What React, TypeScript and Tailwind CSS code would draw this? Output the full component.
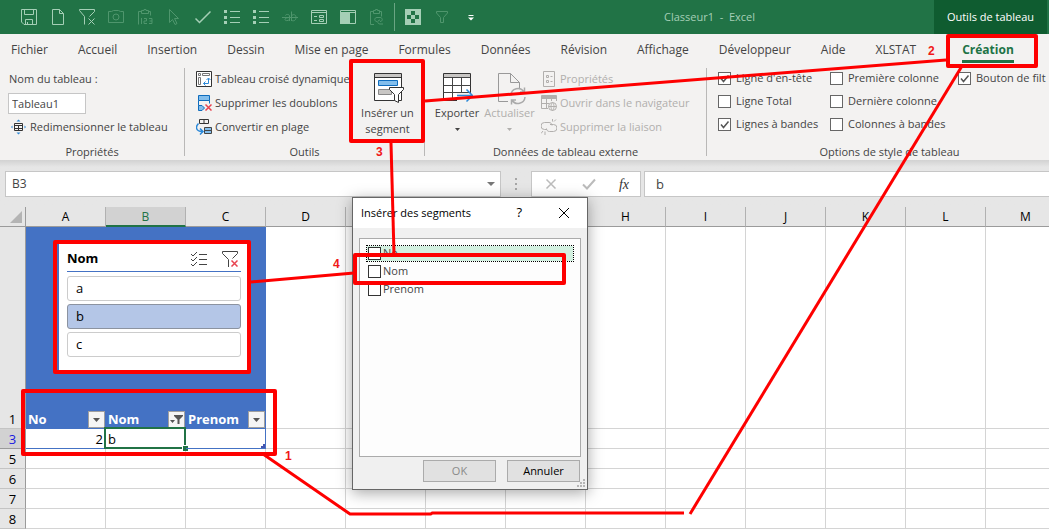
import { ReactNode, useState } from 'react';
import clsx from 'clsx';

const tabs = [
  'Fichier',
  'Accueil',
  'Insertion',
  'Dessin',
  'Mise en page',
  'Formules',
  'Données',
  'Révision',
  'Affichage',
  'Développeur',
  'Aide',
  'XLSTAT',
];

const columns = ['A', 'B', 'C', 'D', 'E', 'F', 'G', 'H', 'I', 'J', 'K', 'L', 'M'];

const Svg = ({ size = 16, children }: { size?: number; children: ReactNode }) => (
  <svg
    width={size}
    height={size}
    viewBox={`0 0 ${size} ${size}`}
    fill="none"
    stroke="currentColor"
    className="shrink-0"
    aria-hidden
  >
    {children}
  </svg>
);

const bulletList = (
  <>
    <path d="M6 2.5h10M6 8.5h10M6 13.5h10" />
    <path d="M0 1h3v3H0zM0 7h3v3H0zM0 12h3v3H0z" fill="currentColor" stroke="none" />
  </>
);

const quickActions: { name: string; dim?: boolean; icon: ReactNode }[] = [
  {
    name: 'Enregistrer',
    icon: <path d="M.5.5h15v15H3L.5 13zM3.5.5v5h9v-5M4.5 15.5v-5h7v5M6.5 13v2.5" />,
  },
  { name: 'Nouveau', icon: <path d="M2.5.5h7l4 4v11h-11zM9.5.5v4h4" /> },
  {
    name: 'Effacer le filtre',
    icon: <path d="M.5 1.5v-1h15v2l-5 5M.5 1.5l5 6v8M9.5 9.5l6 6M15.5 9.5l-6 6" />,
  },
  {
    name: 'Appareil photo',
    dim: true,
    icon: (
      <>
        <path d="M.5 2.5h3l2-1h5l2 1h3v11H.5z" />
        <circle cx="8" cy="8" r="3" />
      </>
    ),
  },
  {
    name: 'Coller les valeurs',
    dim: true,
    icon: (
      <>
        <path d="M1.5 15.5v-13h3M11.5 2.5h2v4M4.5 4.5v-3H7v-1h2v1h2.5v3z" />
        <path d="M4.5 9v6M4 9.5h1M7 9.5h2.5V12H7v2.5h3M12 9.5h3v5h-3M12.5 12H15" />
      </>
    ),
  },
  { name: 'Sélectionner', dim: true, icon: <path d="M3.5.5l9 9h-4l2.5 5-2 1-2.5-5-3 3z" /> },
  { name: 'Valider', icon: <path d="M.5 9.5l4 4 11-11" strokeWidth="1.5" /> },
  { name: 'Puces', icon: bulletList },
  { name: 'Liste', icon: bulletList },
  {
    name: 'Barré',
    dim: true,
    icon: (
      <>
        <path d="M0 8.5h16M7.5 12V7c0-2-4-2-4-.5M7.5 8.5C5.500 8.500 3 9 3 10.500s3 1.500 4.500 0" />
        <path d="M9.5 2.5V12M9.5 7c1-2 4.500-2 4.500 1.500S10.500 12.500 9.500 11" />
      </>
    ),
  },
  {
    name: 'Formulaire',
    icon: <path d="M.5 1.5h15v13H.5zM.5 3.5h15M3 7.5h3M3 11.5h3M8.5 6.5h4v2h-4zM8.5 10.5h4v2h-4z" />,
  },
  {
    name: 'Volet',
    icon: (
      <>
        <path d="M.5 1.5h15v13H.5zM.5 3.5h15" />
        <path d="M0 4h10v11H0z" fill="currentColor" stroke="none" />
      </>
    ),
  },
  {
    name: 'Collage spécial',
    dim: true,
    icon: (
      <>
        <path d="M5 15.5H1.5v-13h3M10.5 2.5h2v5M4.5 4.5v-3h2v-1h2v1h2v3z" />
        <path d="M8 12.5c-3 0-3-4 0-4h3c3 0 3 4 0 4M11 11c-3 0-3 4 0 4h3" />
      </>
    ),
  },
];

const QuickButton = ({ name, dim, children }: { name: string; dim?: boolean; children: ReactNode }) => (
  <button
    aria-label={name}
    className={clsx('flex h-full w-[29px] items-center justify-center', dim ? 'text-[#4f966d]' : 'text-[#a5cfb6]')}
  >
    <Svg>{children}</Svg>
  </button>
);

const Check = ({
  label,
  checked = false,
  compact = false,
}: {
  label: string;
  checked?: boolean;
  compact?: boolean;
}) => {
  const [on, setOn] = useState(checked);
  return (
    <label className={clsx('flex items-center whitespace-nowrap', compact ? 'gap-0.5' : 'gap-[5px]')}>
      <span className="grid">
        <input
          type="checkbox"
          checked={on}
          onChange={() => setOn(!on)}
          className={clsx(
            'peer col-start-1 row-start-1 size-[13px] appearance-none border bg-white',
            compact ? 'border-[#333]' : 'border-[#666]',
          )}
        />
        <svg
          viewBox="0 0 13 13"
          className="pointer-events-none invisible col-start-1 row-start-1 size-[13px] peer-checked:visible"
          fill="none"
          stroke="#555"
          strokeWidth="1.5"
        >
          <path d="M3 6.5l2.5 3 5-6" />
        </svg>
      </span>
      {label}
    </label>
  );
};

const Group = ({ title, className, children }: { title: string; className: string; children: ReactNode }) => (
  <section className={clsx('flex shrink-0 flex-col', className)}>
    <div className="h-[72px]">{children}</div>
    <h2 className="pt-1 text-center leading-[17px]">{title}</h2>
  </section>
);

const Separator = () => <div className="mt-px mb-1 w-px shrink-0 bg-[#b9b8b7]" />;

const Command = ({ icon, label, disabled }: { icon: ReactNode; label: string; disabled?: boolean }) => (
  <button disabled={disabled} className="flex h-6 items-center gap-[3px] whitespace-nowrap disabled:text-[#b1afad]">
    <Svg>{icon}</Svg>
    {label}
  </button>
);

const Caret = () => (
  <svg width="5" height="3" viewBox="0 0 5 3" className="fill-current" aria-hidden>
    <path d="M0 0h5L2.5 3z" />
  </svg>
);

const FilterButton = ({ label, active }: { label: string; active?: boolean }) => (
  <button
    aria-label={label}
    className="flex size-[17px] shrink-0 items-center justify-center border border-[#a0a0a0] bg-[#f5f5f5] text-[#555]"
  >
    {active ? (
      <svg width="13" height="11" viewBox="0 0 13 11" className="fill-current" aria-hidden>
        <path d="M4 1h9v1L9.5 5.5V10h-2V5.5L4 2zM0 6h5L2.5 9z" />
      </svg>
    ) : (
      <svg width="7" height="4" viewBox="0 0 7 4" className="fill-current" aria-hidden>
        <path d="M0 0h7L3.5 4z" />
      </svg>
    )}
  </button>
);

function TitleBar() {
  return (
    <header className="flex h-[34px] items-center bg-[#217346] pr-0.5 pl-[14px]">
      {quickActions.map((action) => (
        <QuickButton key={action.name} name={action.name} dim={action.dim}>
          {action.icon}
        </QuickButton>
      ))}
      <div className="mx-[3px] h-7 w-px bg-[#6aa583]" />
      <QuickButton name="Motif">
        <path d="M0 0h16v16H0z" fill="currentColor" stroke="none" />
        <path d="M6 2h4v4H6zM2 6h4v4H2zM10 6h4v4h-4zM6 10h4v4H6z" fill="#217346" stroke="none" />
      </QuickButton>
      <QuickButton name="Filtrer" dim>
        <path d="M2.5 2.5h11V4l-4 4.5v5h-3v-5L2.500 4z" />
      </QuickButton>
      <button aria-label="Personnaliser" className="flex h-full w-[29px] items-center justify-center text-white">
        <Svg>
          <path d="M5.5 6.5h5" />
          <path d="M5 8.5h6l-3 3z" fill="currentColor" stroke="none" />
        </Svg>
      </button>
      <h1 className="flex-1 text-center whitespace-pre text-[#a5cfb6]">Classeur1  -  Excel</h1>
      <div className="flex h-full w-[113px] items-center justify-center bg-[#0f5c30] text-white">Outils de tableau</div>
    </header>
  );
}

function Ribbon() {
  return (
    <div className="overflow-hidden bg-[#f3f2f1]">
      <nav className="flex h-8 items-center gap-[30px] pl-[11px] text-[12px] whitespace-nowrap">
        {tabs.map((tab) => (
          <a key={tab} href="#">
            {tab}
          </a>
        ))}
        <a href="#" className="ml-4 border-b-3 border-[#217346] pt-[3px] leading-5 font-bold text-[#217346]">
          Création
        </a>
      </nav>

      <div className="flex h-[94px] pt-px">
        <Group title="Propriétés" className="w-[184px]">
          <label htmlFor="table-name" className="block pl-[9px] leading-6">
            Nom du tableau :
          </label>
          <div className="flex h-6 items-center pl-2">
            <input
              id="table-name"
              defaultValue="Tableau1"
              className="h-[21px] w-[78px] border border-[#c6c6c6] bg-white px-[3px]"
            />
          </div>
          <div className="pl-[11px]">
            <Command
              label="Redimensionner le tableau"
              icon={
                <>
                  <path d="M3.5 4.5h8v7h-8zM3.5 6.5h8M3.5 9.500h8M7.5 6.5v5" stroke="#333" />
                  <path d="M5.5 2.5l2-2 2 2zM5.500 13.5l2 2 2-2zM1.500 6.500v3L0 8zM13.500 6.500v3L15 8z" fill="#2b88d8" stroke="none" />
                </>
              }
            />
          </div>
        </Group>
        <Separator />

        <Group title="Outils" className="w-[239px]">
          <div className="flex">
            <div className="w-[166px] pl-[11px]">
              <Command
                label="Tableau croisé dynamique"
                icon={
                  <>
                    <path d="M.5.5h15v15H.5z" fill="#fff" stroke="#333" />
                    <path d="M2.5 2.5h2v2h-2zM6.5 2.5h7v2h-7zM2.5 6.5h2v7h-2z" stroke="#777" />
                    <path d="M7.5 12.5h5v-5M9.5 10.5l-2 2 2 2M10.5 9l2-2 2 2" stroke="#2b88d8" />
                  </>
                }
              />
              <Command
                label="Supprimer les doublons"
                icon={
                  <>
                    <path d="M2.5.5h11v5h-11zM2.5 10.5v5H6L8.500 13 6 10.500z" fill="#83beec" stroke="#0f6cbd" />
                    <path d="M13.500 5.500v3M2.500 5.500v5" stroke="#0f6cbd" />
                    <path d="M9.5 9.5l6 6M15.5 9.5l-6 6" stroke="#e8434f" strokeWidth="1.5" />
                  </>
                }
              />
              <Command
                label="Convertir en plage"
                icon={
                  <>
                    <path d="M3.5.5h9v4h-9zM8 .5v4" stroke="#333" />
                    <path d="M8.5 8.5h7v3h-7zM8.5 11.5h7v3h-7z" fill="#83beec" stroke="#444" />
                    <path d="M2.5 4.5C-1 8 0 12.500 6 12.500M4 9.500l3 3-3 3" stroke="#2b88d8" strokeWidth="1.5" />
                  </>
                }
              />
            </div>
            <button className="flex flex-1 flex-col items-center pt-1.5 leading-4">
              <Svg size={32}>
                <path d="M2.5.5h27v27h-27z" fill="#fff" stroke="#333" />
                <path d="M3 1h26v3H3z" fill="#c8c6c4" stroke="none" />
                <path d="M2.5 4.5h27" stroke="#333" />
                <path d="M6.5 7.5h19v5h-19z" fill="#83beec" stroke="#0f6cbd" />
                <path d="M6.5 16.5h13v5h-13z" fill="#c8c6c4" stroke="#888" />
                <path d="M17.5 14.5h14v2l-5 5v8l-4-2v-6l-5-5z" fill="#fff" stroke="#333" />
              </Svg>
              <span>Insérer un</span>
              <span>segment</span>
            </button>
          </div>
        </Group>
        <Separator />

        <Group title="Données de tableau externe" className="w-[281px]">
          <div className="flex pl-[6px]">
            <button className="flex w-[52px] flex-col items-center pt-1.5 leading-4">
              <Svg size={32}>
                <path d="M2.5.5h27v27h-27z" fill="#fff" stroke="#333" />
                <path d="M3 1h26v3H3z" fill="#c8c6c4" stroke="none" />
                <path d="M2.5 4.5h27M2.5 12.5h27M2.5 19.5h27M11.5 4.5v23M20.5 4.5v23" stroke="#444" />
                <path d="M16 20h16v9H16z" fill="#f3f2f1" stroke="none" />
                <path d="M16 22.5h15M25.5 16.5l6 6-6 6" stroke="#2b88d8" strokeWidth="1.5" />
              </Svg>
              <span>Exporter</span>
              <span className="flex h-4 items-center">
                <Caret />
              </span>
            </button>
            <button disabled className="flex w-[53px] flex-col items-center pt-1.5 leading-4 text-[#b1afad]">
              <Svg size={32}>
                <path d="M14 28.5H4.5V.5h12l9 9V15M16.5.5v9h9" stroke="#999" />
                <path
                  d="M17 22.500a7 7 0 0 1 13-3.500M30.500 14.500V19H26M31 24a7 7 0 0 1-13 3M17.500 31.500V27H22"
                  stroke="#aaa"
                  strokeWidth="1.5"
                />
              </Svg>
              <span>Actualiser</span>
              <span className="flex h-4 items-center">
                <Caret />
              </span>
            </button>
            <div className="pl-[5px]">
              <Command
                disabled
                label="Propriétés"
                icon={<path d="M2.5.5h11v15h-11zM5.5 4.5h2v2h-2zM5.5 9.5h2v2h-2zM9.5 5.5h2M9.5 10.5h2" />}
              />
              <Command
                disabled
                label="Ouvrir dans le navigateur"
                icon={
                  <>
                    <path d="M7 13.5H.5V.5h15V6M.5 3.5h15M.5 8.5H8M5.5 3.5v10M10.5 3.5V6" />
                    <path d="M0 1h16v2H0z" fill="currentColor" stroke="none" />
                    <circle cx="11.5" cy="11.5" r="4" />
                    <path d="M7.5 11.5h8M11.5 7.5c-2 2-2 6 0 8M11.5 7.5c2 2 2 6 0 8" />
                  </>
                }
              />
              <Command
                disabled
                label="Supprimer la liaison"
                icon={
                  <path d="M6 10.5H3.5a3 3 0 0 1 0-7H8c2 0 3 1.5 3 3M9 5.5h3.5a3 3 0 0 1 0 7h-4c-2 0-3-1.5-3-3M11.5 0v2.5M15 .5l-2 2M4 12.5V16M2 12l-2 2.5" />
                }
              />
            </div>
          </div>
        </Group>
        <Separator />

        <Group title="Options de style de tableau" className="w-[365px]">
          <div className="grid auto-rows-[23px] grid-cols-[112px_128px_auto] pl-[11px]">
            <Check label="Ligne d'en-tête" checked />
            <Check label="Première colonne" />
            <Check label="Bouton de filt" checked />
            <Check label="Ligne Total" />
            <Check label="Dernière colonne" />
            <span />
            <Check label="Lignes à bandes" checked />
            <Check label="Colonnes à bandes" />
          </div>
        </Group>
      </div>
    </div>
  );
}

function FormulaBar() {
  return (
    <div className="flex h-[47px] items-start bg-[#e6e6e6] bg-linear-to-b from-[#d2d2d2] to-[#e6e6e6] to-15% pt-[11px] pl-[5px] text-[12px]">
      <div className="flex h-[26px] w-[496px] shrink-0 items-center border border-[#c6c6c6] bg-white pr-[5px] pl-[6px]">
        <input aria-label="Zone Nom" defaultValue="B3" className="min-w-0 flex-1 bg-transparent" />
        <button aria-label="Noms" className="text-[#777]">
          <svg width="8" height="4" viewBox="0 0 8 4" className="fill-current" aria-hidden>
            <path d="M0 0h8L4 4z" />
          </svg>
        </button>
      </div>
      <div className="flex h-[26px] w-[30px] shrink-0 flex-col items-center justify-center gap-[3px]">
        <span className="size-0.5 bg-[#a6a6a6]" />
        <span className="size-0.5 bg-[#a6a6a6]" />
        <span className="size-0.5 bg-[#a6a6a6]" />
      </div>
      <div className="flex h-[26px] w-[110px] shrink-0 items-center justify-around border border-[#c6c6c6] bg-white text-[#bbb]">
        <button aria-label="Annuler la saisie">
          <Svg>
            <path d="M3.5 3.5l9 9M12.5 3.5l-9 9" strokeWidth="1.5" />
          </Svg>
        </button>
        <button aria-label="Entrer">
          <Svg>
            <path d="M2 8.5l4 4 8-9" strokeWidth="2" />
          </Svg>
        </button>
        <button
          aria-label="Insérer une fonction"
          className="font-['Liberation_Serif',serif] text-[14px] text-[#333] italic"
        >
          fx
        </button>
      </div>
      <input
        aria-label="Barre de formule"
        defaultValue="b"
        className="ml-[3px] h-[26px] min-w-0 flex-1 border border-r-0 border-[#c6c6c6] bg-white px-[11px] text-[13px]"
      />
    </div>
  );
}

const RowHeader = ({ n, selected }: { n: number; selected?: boolean }) => (
  <th
    className={clsx(
      'border-r border-b border-r-[#9b9b9b] p-0 align-bottom font-normal',
      selected ? 'border-b-[#9b9b9b] bg-[#d2d2d2] text-[#1a1ae0]' : 'border-b-[#c4c4c4] bg-[#e6e6e6]',
    )}
  >
    {n}
  </th>
);

const emptyCells = (from: number) =>
  columns.slice(from).map((col) => <td key={col} className="border-r border-b border-[#d4d4d4]" />);

function Sheet() {
  return (
    <div className="overflow-hidden">
      <table className="w-[1066px] table-fixed border-separate border-spacing-0 text-[13px] leading-[18px] text-black">
        <colgroup>
          <col className="w-[26px]" />
          {columns.map((col) => (
            <col key={col} className="w-20" />
          ))}
        </colgroup>
        <thead>
          <tr className="h-5 bg-[#e6e6e6] text-[12px]">
            <th className="border-r border-b border-[#9b9b9b]">
              <svg width="12" height="12" viewBox="0 0 12 12" className="mr-[3px] ml-auto fill-[#b4b4b4]" aria-hidden>
                <path d="M12 0v12H0z" />
              </svg>
            </th>
            {columns.map((col) => (
              <th
                key={col}
                className={clsx(
                  'border-r border-r-[#b1b1b1] p-0 font-normal',
                  col === 'B'
                    ? 'border-b-2 border-b-[#217346] bg-[#d2d2d2] leading-[17px] text-[#217346]'
                    : 'border-b border-b-[#9b9b9b]',
                )}
              >
                {col}
              </th>
            ))}
          </tr>
        </thead>
        <tbody>
          <tr className="h-[202px]">
            <RowHeader n={1} />
            {['No', 'Nom', 'Prenom'].map((name) => (
              <td key={name} className="bg-[#4472c4] pr-px pl-0.5 align-bottom font-bold text-white">
                <div className="flex items-end justify-between pb-px">
                  {name}
                  <FilterButton label={`Filtrer ${name}`} active={name === 'Nom'} />
                </div>
              </td>
            ))}
            {emptyCells(3)}
          </tr>
          <tr className="h-5">
            <RowHeader n={3} selected />
            <td className="border-b border-[#4472c4] pr-[3px] text-right">2</td>
            <td className="relative border-b border-[#4472c4] pl-0.5">
              b
              <span className="absolute -top-0.5 right-0 -bottom-px -left-0.5 border-2 border-[#217346]" />
              <span className="absolute -right-0.5 -bottom-[3px] size-[6px] border-t border-l border-white bg-[#217346]" />
            </td>
            <td className="relative border-r border-b border-[#4472c4]">
              <svg width="4" height="4" viewBox="0 0 4 4" className="absolute right-0 bottom-0 fill-[#4455b0]" aria-hidden>
                <path d="M2 0h2v4H0V2h2z" />
              </svg>
            </td>
            {emptyCells(3)}
          </tr>
          {[5, 6, 7, 8].map((n) => (
            <tr key={n} className="h-5">
              <RowHeader n={n} />
              {emptyCells(0)}
            </tr>
          ))}
        </tbody>
      </table>
    </div>
  );
}

function Slicer() {
  const [selected, setSelected] = useState('b');
  return (
    <div className="absolute top-[244px] left-[59px] h-[126px] w-[188px] bg-white pt-0.5 pr-[6px] pl-2 text-[13px] text-black">
      <div className="mb-1 flex h-[26px] items-center border-b border-[#4472c4] text-[#444]">
        <h3 className="flex-1 font-bold text-black">Nom</h3>
        <button aria-label="Sélection multiple" className="mr-[15px]">
          <Svg>
            <path d="M8 3.5h8M8 8.5h8M8 13.5h8M0 3l2 2 4-4M0 8l2 2 4-4M0 13l2 2 4-4" />
          </Svg>
        </button>
        <button aria-label="Effacer le filtre" className="mr-[3px]">
          <Svg>
            <path d="M6.5 16V8.5l-6-6v-2h15v2l-5 5" />
            <path d="M9.5 9.5l6 6M15.5 9.5l-6 6" stroke="#e8434f" strokeWidth="1.5" />
          </Svg>
        </button>
      </div>
      <div className="flex flex-col gap-[3px]">
        {['a', 'b', 'c'].map((item) => (
          <button
            key={item}
            onClick={() => setSelected(item)}
            className={clsx(
              'h-[25px] rounded-[3px] border px-2 text-left',
              selected === item ? 'border-[#8c93a0] bg-[#b4c6e7]' : 'border-[#ccc] bg-white',
            )}
          >
            {item}
          </button>
        ))}
      </div>
    </div>
  );
}

function SlicerDialog() {
  return (
    <div
      role="dialog"
      aria-label="Insérer des segments"
      className="absolute top-[197px] left-[352px] w-[236px] border border-[#666] bg-[#f0f0f0] text-black shadow-[0_3px_14px_rgba(0,0,0,0.35)]"
    >
      <div className="flex h-[30px] items-center bg-white pl-2">
        <h2 className="flex-1">Insérer des segments</h2>
        <button aria-label="Aide" className="mr-[34px] text-[13px]">
          ?
        </button>
        <button aria-label="Fermer" className="mr-[15px]">
          <svg width="16" height="16" viewBox="0 0 16 16" fill="none" stroke="currentColor" aria-hidden>
            <path d="M3 3l10 10M13 3L3 13" />
          </svg>
        </button>
      </div>
      <div className="mx-[6px] mt-[10px] h-[219px] border border-[#ababab] bg-[#fdfdfd] px-[7px] pt-[7px] text-[#444]">
        {['No', 'Nom', 'Prenom'].map((field) => (
          <div
            key={field}
            className={clsx(
              'mb-[3px] flex h-[15px] items-center pl-px',
              field === 'No' && 'bg-[#d3f0e0] outline-1 outline-dotted outline-black',
            )}
          >
            <Check label={field} compact />
          </div>
        ))}
      </div>
      <div className="flex justify-end gap-[11px] pt-[3px] pr-[7px] pb-[7px]">
        <button disabled className="h-[22px] w-[73px] border border-[#ababab] bg-[#e1e1e1] text-[#8a8a8a]">
          OK
        </button>
        <button className="h-[22px] w-[73px] border border-[#ababab] bg-[#e1e1e1]">Annuler</button>
      </div>
      <svg width="8" height="8" viewBox="0 0 8 8" className="absolute right-0.5 bottom-0.5 fill-[#b5b5b5]" aria-hidden>
        <path d="M6 0h2v2H6zM3 3h2v2H3zM6 3h2v2H6zM0 6h2v2H0zM3 6h2v2H3zM6 6h2v2H6z" />
      </svg>
    </div>
  );
}

// Numbered steps drawn by hand over the workbook
function Annotations() {
  return (
    <div className="pointer-events-none absolute inset-0 overflow-hidden font-['Liberation_Sans',sans-serif] text-[12px] leading-3 font-bold text-[#f01818]">
      <svg width="1049" height="529" viewBox="0 0 1049 529" fill="none" stroke="#fe0000" strokeLinejoin="round" aria-hidden>
        <g strokeWidth="4">
          <rect x="948" y="36" width="88" height="30" />
          <rect x="351" y="61" width="72" height="80" />
          <rect x="55" y="242" width="194" height="130" />
          <rect x="23" y="391" width="252" height="63" />
          <rect x="355" y="255" width="209" height="28" />
        </g>
        <g strokeWidth="3">
          <path d="M263 454l87 60h81l1-1h252" />
          <path d="M690 514L962 66" />
          <path d="M425 101L946 60" />
          <path d="M391 143l3 111" />
          <path d="M251 282l103-9" />
        </g>
      </svg>
      <span className="absolute top-[450px] left-[285px]">1</span>
      <span className="absolute top-[45px] left-[928px]">2</span>
      <span className="absolute top-[146px] left-[376px]">3</span>
      <span className="absolute top-[258px] left-[333px]">4</span>
    </div>
  );
}

export default function App() {
  return (
    <div className="relative min-h-screen overflow-hidden bg-white font-['Open_Sans','Noto_Sans',sans-serif] text-[11px] text-[#444]">
      <TitleBar />
      <Ribbon />
      <FormulaBar />
      <Sheet />
      <Slicer />
      <SlicerDialog />
      <Annotations />
    </div>
  );
}
